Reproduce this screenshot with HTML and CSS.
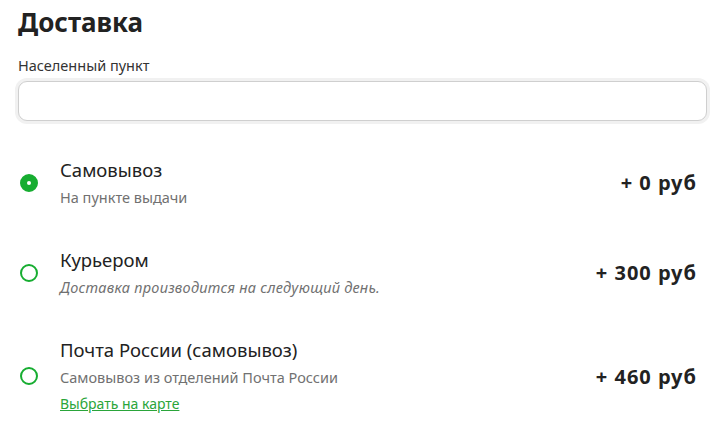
FILE: index.html
```html
<!DOCTYPE html>
<html lang="ru">
<head>
    <meta charset="UTF-8">
    <title>Доставка</title>
    <link rel="stylesheet" href="styles.css">
</head>
<body>
    <div class="delivery">
        <h1>Доставка</h1>
        <label class="field-label" for="city">Населенный пункт</label>
        <input type="text" id="city" class="city-input">

        <div class="options">
            <label class="option">
                <span class="radio checked"></span>
                <span class="option-info">
                    <span class="option-title">Самовывоз</span>
                    <span class="option-sub">На пункте выдачи</span>
                </span>
                <span class="option-price">+ 0 руб</span>
            </label>
            <label class="option">
                <span class="radio"></span>
                <span class="option-info">
                    <span class="option-title">Курьером</span>
                    <span class="option-sub italic">Доставка производится на следующий день.</span>
                </span>
                <span class="option-price">+ 300 руб</span>
            </label>
            <label class="option">
                <span class="radio"></span>
                <span class="option-info">
                    <span class="option-title">Почта России (самовывоз)</span>
                    <span class="option-sub">Самовывоз из отделений Почта России</span>
                    <a class="map-link" href="#">Выбрать на карте</a>
                </span>
                <span class="option-price">+ 460 руб</span>
            </label>
        </div>
    </div>
</body>
</html>
```

FILE: styles.css
```css
body {
    margin: 0;
    font-family: "Noto Sans", "Open Sans", sans-serif;
    background-color: #fff;
    color: #222;
}
.delivery {
    padding: 4px 15px 0 18px;
}
.delivery h1 {
    margin: 0;
    font-size: 26px;
    line-height: 36px;
    font-weight: 700;
    color: #222;
}
.field-label {
    display: block;
    margin-top: 16px;
    font-size: 14.5px;
    line-height: 18px;
    color: #333;
}
.city-input {
    display: block;
    box-sizing: border-box;
    width: 100%;
    height: 40px;
    margin-top: 7px;
    border: 1px solid #cfcfcf;
    border-radius: 9px;
    box-shadow: 0 0 0 3px #f1f1f1;
    outline: none;
    font-size: 15px;
    padding: 0 12px;
}
.options {
    margin-top: 37px;
}
.option {
    display: flex;
    align-items: center;
    padding-right: 10px;
    margin-bottom: 41px;
    cursor: pointer;
}
.option:last-child {
    margin-bottom: 0;
}
.radio {
    box-sizing: border-box;
    flex: none;
    width: 18px;
    height: 18px;
    margin-left: 2px;
    border: 2px solid #17ad31;
    border-radius: 50%;
}
.radio.checked {
    background-color: #17ad31;
    position: relative;
}
.radio.checked::after {
    content: "";
    position: absolute;
    left: 5px;
    top: 5px;
    width: 4px;
    height: 4px;
    border-radius: 50%;
    background-color: #fff;
}
.option-info {
    flex: 1;
    display: flex;
    flex-direction: column;
    margin-left: 22px;
}
.option-title {
    font-size: 18.5px;
    line-height: 24px;
    color: #222;
}
.option-sub {
    margin-top: 5px;
    font-size: 14.5px;
    line-height: 20px;
    color: #717171;
}
.option-sub.italic {
    font-style: italic;
    letter-spacing: 0.25px;
}
.map-link {
    margin-top: 7px;
    font-size: 14px;
    line-height: 20px;
    color: #2aa53a;
    align-self: flex-start;
}
.option-price {
    font-size: 20px;
    letter-spacing: 1px;
    font-weight: 700;
    color: #222;
}
```
